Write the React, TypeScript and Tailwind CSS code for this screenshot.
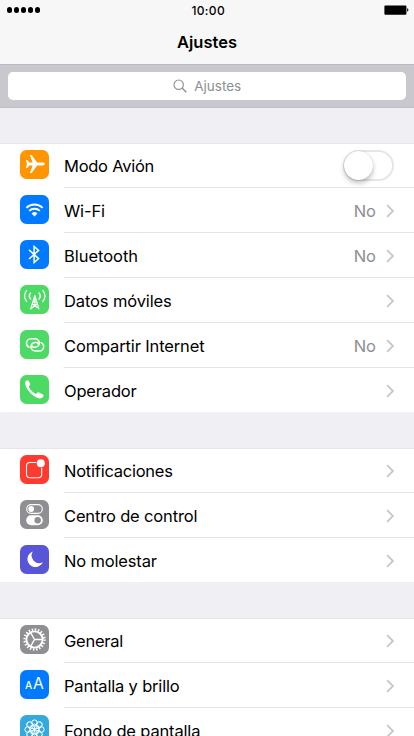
import type { ReactNode } from "react";

type Row = {
  label: string;
  tracking: string;
  tile: string;
  icon: ReactNode;
  value?: string;
  toggle?: boolean;
};

const line = { fill: "none", stroke: "#fff" } as const;

function Airplane() {
  return (
    <path
      fill="#fff"
      d="M24.8 14c0 .8-1 1.4-2.4 1.4h-5.2L11.6 23H9.9l2.7-7.6H9.3L7.3 18H6l.9-4L6 10h1.3l2 2.6h3.3L9.9 5h1.7l5.6 7.6h5.2c1.4 0 2.4.6 2.4 1.4z"
    />
  );
}

function Wifi() {
  return (
    <g {...line} strokeWidth="2">
      <path d="M6.4 12.9a11.6 11.6 0 0 1 16.2 0" />
      <path d="M9.2 15.9a7.6 7.6 0 0 1 10.6 0" />
      <path d="M14.5 21.4l-2.9-3a4.1 4.1 0 0 1 5.8 0z" fill="#fff" stroke="none" />
    </g>
  );
}

function Bluetooth() {
  return <path {...line} strokeWidth="1.5" d="M9 9.9l9.6 8.7-4.5 4V6.4l4.5 4L9 19" />;
}

function Tower() {
  return (
    <g {...line} strokeWidth="1.15" strokeLinecap="round">
      <path d="M14.5 11.5L10.7 24M15.1 11.5L18.9 24M14.8 12v6M13 16.8h3.6M12.2 19.3h5.2M12.4 19l5.5 4M17.2 19l-5.5 4" />
      <circle cx="14.8" cy="11.3" r="1" fill="#fff" stroke="none" />
      <path d="M10.6 8a4.6 4.6 0 0 0 0 6M19 8a4.6 4.6 0 0 1 0 6" strokeWidth="1.4" />
      <path d="M6.6 5.6a8.7 8.7 0 0 0 0 10.8M23 5.6a8.7 8.7 0 0 1 0 10.8" strokeWidth="1.4" />
    </g>
  );
}

function Hotspot() {
  const link = "M9.1 17.2C7.400 16.500 6.500 15 6.500 13.200A4.400 4.400 0 0 1 10.900 8.800h4a4.300 4.300 0 0 1 4.400 4.200 4.200 4.200 0 0 1-4.200 4.200h-1.300a1.700 1.700 0 0 1-1.700-1.300";
  return (
    <g {...line} strokeWidth="1.5" strokeLinecap="round">
      <path d={link} />
      <path d={link} transform="rotate(180 15.1 14.9)" />
    </g>
  );
}

function Phone() {
  return (
    <path
      fill="#fff"
      d="M5.2 7.1C5.4 6 7 5 7.8 5.2c.8.3 2 2.7 2.4 3.8.3.9-1.4 1.7-1.3 2.7.2 2 4.8 6.6 6.9 7 .9.2 1.6-1.6 2.6-1.4 1.2.2 4.2 1.9 5 2.7.7.8-.8 2.8-2.2 3.3C15.9 24.8 4.6 14.8 5.2 7.1z"
    />
  );
}

function Notifications() {
  return (
    <g>
      <path
        {...line}
        strokeWidth="1.1"
        d="M16.3 7.5H10A3.5 3.5 0 0 0 6.5 11v8.3a3.5 3.5 0 0 0 3.5 3.5h8.2a3.5 3.5 0 0 0 3.5-3.5v-6.5"
      />
      <circle cx="20.8" cy="8.3" r="4" fill="#fff" />
    </g>
  );
}

function ControlCenter() {
  return (
    <g>
      <rect {...line} strokeWidth="1.1" x="6.7" y="4.6" width="15.6" height="8.8" rx="4.4" />
      <circle cx="11.2" cy="9" r="2.9" fill="#fff" />
      <rect x="6.2" y="15.2" width="16.6" height="10" rx="5" fill="#fff" />
      <circle cx="17.7" cy="20.2" r="3.2" fill="#8e8e93" />
    </g>
  );
}

function Moon() {
  return <path fill="#fff" d="M12.8 6.5A8 8 0 1 0 22.8 17.2 7.6 7.6 0 0 1 12.8 6.5z" />;
}

function Gear() {
  return (
    <g {...line}>
      <circle cx="14.5" cy="14.5" r="8.1" strokeWidth="1.9" />
      <circle cx="14.5" cy="14.5" r="10" strokeWidth="2.4" strokeDasharray="1.5 1.642" />
      <path strokeWidth="1.4" d="M14.5 14.5H22M14.5 14.5l-3.9-6.8M14.5 14.5l-3.9 6.8" />
    </g>
  );
}

function TextSize() {
  return (
    <g fill="#fff" fontFamily="Inter, sans-serif">
      <text x="5" y="19.1" fontSize="10.2" fontWeight="500">A</text>
      <text x="13.1" y="19.2" fontSize="15.6" fontWeight="400">A</text>
    </g>
  );
}

function Flower() {
  return (
    <g {...line} strokeWidth="1">
      {[0, 45, 90, 135, 180, 225, 270, 315].map((angle) => (
        <circle key={angle} cx="14.5" cy="7.7" r="2.8" transform={`rotate(${angle} 14.5 14.5)`} />
      ))}
      {[0, 60, 120, 180, 240, 300].map((angle) => (
        <circle key={angle} cx="14.5" cy="11.7" r="2.6" strokeWidth=".8" transform={`rotate(${angle} 14.5 14.5)`} />
      ))}
    </g>
  );
}

const groups: Row[][] = [
  [
    { label: "Modo Avión", tracking: "tracking-[-0.26px]", tile: "bg-[#ff9500]", icon: <Airplane />, toggle: true },
    { label: "Wi-Fi", tracking: "tracking-[-0.15px]", tile: "bg-[#007aff]", icon: <Wifi />, value: "No" },
    { label: "Bluetooth", tracking: "tracking-[-0.03px]", tile: "bg-[#007aff]", icon: <Bluetooth />, value: "No" },
    { label: "Datos móviles", tracking: "tracking-[-0.12px]", tile: "bg-[#4cd964]", icon: <Tower /> },
    { label: "Compartir Internet", tracking: "tracking-[-0.14px]", tile: "bg-[#4cd964]", icon: <Hotspot />, value: "No" },
    { label: "Operador", tracking: "tracking-[-0.18px]", tile: "bg-[#4cd964]", icon: <Phone /> },
  ],
  [
    { label: "Notificaciones", tracking: "tracking-[-0.24px]", tile: "bg-[#ff3b30]", icon: <Notifications /> },
    { label: "Centro de control", tracking: "tracking-[-0.16px]", tile: "bg-[#8e8e93]", icon: <ControlCenter /> },
    { label: "No molestar", tracking: "tracking-[-0.16px]", tile: "bg-[#5856d6]", icon: <Moon /> },
  ],
  [
    { label: "General", tracking: "tracking-[-0.26px]", tile: "bg-[#8e8e93]", icon: <Gear /> },
    { label: "Pantalla y brillo", tracking: "tracking-[-0.18px]", tile: "bg-[#007aff]", icon: <TextSize /> },
    { label: "Fondo de pantalla", tracking: "tracking-[-0.16px]", tile: "bg-[#34aadc]", icon: <Flower /> },
  ],
];

function SettingsRow({ row, last }: { row: Row; last: boolean }) {
  return (
    <div className={`flex shrink-0 pl-5 ${last ? "h-11" : "h-[45px]"}`}>
      <div className={`mt-[7px] mr-[15px] size-[29px] shrink-0 overflow-hidden rounded-[6.5px] ${row.tile}`}>
        <svg width="29" height="29" viewBox="0 0 29 29">{row.icon}</svg>
      </div>
      <div className={`flex flex-1 items-center pt-px pr-5 ${last ? "" : "border-b border-[#e4e4e6]"}`}>
        <span className={`flex-1 text-[16.5px] leading-5 whitespace-nowrap text-black ${row.tracking}`}>{row.label}</span>
        {row.value && <span className="mr-[9px] text-[16.5px] leading-5 text-[#8e8e93]">{row.value}</span>}
        {row.toggle ? (
          <span className="-mt-px flex h-[31px] w-[51px] rounded-full border-2 border-[#e6e6e6] bg-white">
            <span className="-mt-px -ml-px size-[29px] rounded-full bg-white shadow-[0_3px_5px_rgba(0,0,0,0.25),0_0_1px_rgba(0,0,0,0.25)]" />
          </span>
        ) : (
          <svg width="9" height="14" viewBox="0 0 9 14" fill="none" stroke="#c7c7cc" strokeWidth="1.8">
            <path d="M2.1 1.1l5.9 5.9-5.9 5.9" />
          </svg>
        )}
      </div>
    </div>
  );
}

export default function App() {
  return (
    <main className="flex h-[736px] w-[414px] flex-col overflow-hidden bg-[#efeff4] font-['Inter',sans-serif]">
      <header className="flex h-[65px] shrink-0 flex-col border-b border-[#b9b9bf] bg-[#f7f7f7]">
        <div className="grid h-5 grid-cols-3 items-center pr-[5px] pl-[6.5px]">
          <div className="flex gap-[1.5px]">
            {[0, 1, 2, 3, 4].map((n) => (
              <i key={n} className="size-[5.5px] rounded-full bg-black" />
            ))}
          </div>
          <span className="pt-px pl-px text-center text-xs leading-4 font-medium tracking-[0.03em]">10:00</span>
          <svg className="justify-self-end" width="25" height="10" viewBox="0 0 25 10">
            <rect x=".4" y=".4" width="22" height="9.3" rx="1" />
            <path d="M23.2 3.3c1.6.3 1.6 3.1 0 3.4z" />
          </svg>
        </div>
        <h1 className="flex flex-1 items-center justify-center text-[16.5px] leading-5 font-semibold">Ajustes</h1>
      </header>
      <div className="h-[43px] shrink-0 border-b border-[#bdbdc3] bg-[#c9c8ce] px-2 pt-[7px]">
        <div className="flex h-7 items-center justify-center rounded-[5px] bg-white text-[#8e8e93]">
          <svg className="mr-[7.5px]" width="14" height="14" viewBox="0 0 14 14" fill="none" stroke="currentColor" strokeWidth="1.1">
            <circle cx="5.7" cy="5.7" r="4.7" />
            <path d="M9.1 9.1l4.2 4.2" strokeWidth="1.4" />
          </svg>
          <span className="text-[13.5px] leading-5">Ajustes</span>
        </div>
      </div>
      {groups.map((rows, g) => (
        <section
          key={g}
          className={`flex shrink-0 flex-col bg-white shadow-[inset_0_1px_0_#e6e6ea] ${g === 0 ? "mt-[35px]" : "mt-9"}`}
        >
          {rows.map((row, i) => (
            <SettingsRow key={row.label} row={row} last={i === rows.length - 1} />
          ))}
        </section>
      ))}
    </main>
  );
}
